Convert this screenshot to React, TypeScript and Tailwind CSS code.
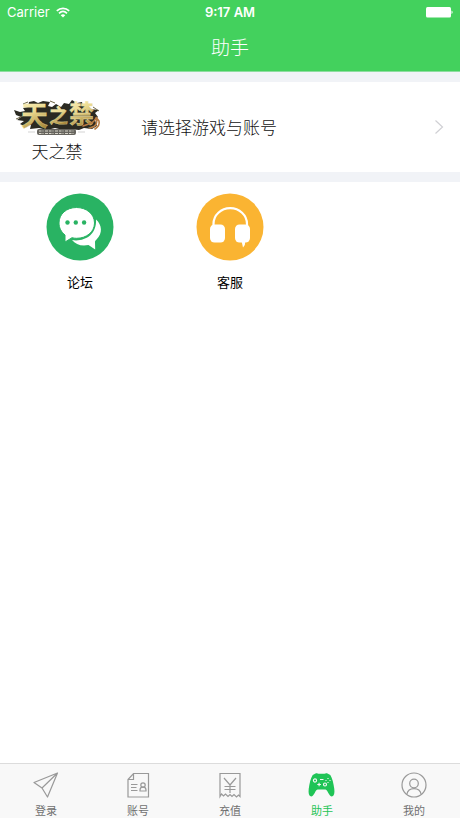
import React, { useState } from "react";

const GameLogo = () => (
  <svg viewBox="0 0 88 44" className="h-11 w-[88px] overflow-visible" aria-hidden="true">
    <defs>
      <linearGradient id="gold" x1="0" y1="0" x2="0.3" y2="1">
        <stop offset="0" stopColor="#fffbd6" />
        <stop offset="0.5" stopColor="#ecdb90" />
        <stop offset="1" stopColor="#a8873a" />
      </linearGradient>
    </defs>
    <path
      d="M1 15l6 2 5-1-2-3 5-1 1-5 5-1 4 2 5-2 7 1-2 4 4 1 4-3 5 3 3-4 5 1 3-4 5 3 5-1 1 4 5-1 2 4 9 1-4 3 3 4-3 3 2 6-5 3-8-1-5 2-9-1-7 1-8-2-8 2-8-2-9 1 1-4-7 1-4-2 4-3-7-1 4-3-5-2z"
      fill="#2b2a22"
    />
    <path d="M3 24l7-3M10 9l5-2M37 6l5 2M80 12l6 4M75 33l7-2" stroke="#6f6848" strokeWidth="1" />
    <g
      fill="url(#gold)"
      fontWeight="700"
      stroke="#f3e7ae"
      strokeWidth="0.3"
      className="font-['Noto_Sans_CJK_SC',sans-serif]"
    >
      <text x="8" y="31" fontSize="27">天</text>
      <text x="36" y="28" fontSize="19">之</text>
      <text x="56" y="28" fontSize="25">禁</text>
    </g>
    <path
      d="M70 31c7-3 10-2 13-8M77 33c6-1 8-5 6-11l3 4c1 4-1 6-4 8"
      fill="none"
      stroke="#b77b43"
      strokeWidth="1.6"
      strokeLinecap="round"
    />
    <path d="M15 37h7M65 37h7" stroke="#c8c8c8" strokeWidth="0.8" />
    <rect x="24" y="34" width="39" height="6" rx="2" fill="#66645e" />
    <path d="M26 36h35M26 38.500h35" stroke="#d8d5ca" strokeWidth="1.200" strokeDasharray="2.5 1 1 1.5 3 1" />
  </svg>
);

const ForumIcon = () => (
  <svg viewBox="0 0 68 68" className="size-[68px]" aria-hidden="true">
    <circle cx="34" cy="34" r="33.5" fill="#29b363" />
    <path
      d="M50 26.500c6 5 7 14 .5 20-1 1-1.500 1.500-1.500 2.500l.2 7.500-6.700-4.400c-7 1.500-13-.5-16.500-5 12 2 25-5 24-20.600z"
      fill="#fff"
    />
    <path
      d="M30.500 14.500c-10 0-17.500 6.500-17.500 15.500 0 5 2.300 9 6 12v7l7-4.300c1.500.4 3 .6 4.500.6 10 0 18-6.300 18-15.300s-8-15.500-18-15.500z"
      fill="#fff"
      stroke="#29b363"
      strokeWidth="1"
    />
    <g fill="#29b363">
      <circle cx="21.500" cy="29.500" r="2.200" />
      <circle cx="29.800" cy="29.500" r="2.200" />
      <circle cx="38.100" cy="29.500" r="2.200" />
    </g>
  </svg>
);

const ServiceIcon = () => (
  <svg viewBox="0 0 68 68" className="size-[68px]" aria-hidden="true">
    <circle cx="34" cy="34" r="33.500" fill="#fab432" />
    <path d="M17.500 34v-3c0-9 7.500-15.800 16.700-15.800S51 22 51 31v3" fill="none" stroke="#fff" strokeWidth="2.200" />
    <rect x="14" y="31.500" width="15" height="18" rx="4.500" fill="#fff" />
    <rect x="39" y="31.500" width="15" height="18" rx="4.500" fill="#fff" />
    <path d="M45.500 48l1.500 6.500 1.800-2.500 .5-4z" fill="#fff" />
  </svg>
);

const LoginIcon = () => <path d="M25.500 2L2 11.500l8 5.500 5.500 9zL10 17" strokeLinejoin="round" />;

const AccountIcon = () => (
  <>
    <path d="M9.500 2.500H24.500V26H4V8.500zM9.500 2.500v6H4" />
    <path d="M7 13.500h6.500M7 16.500h5.500M7 19.500h6.500" />
    <circle cx="19" cy="14" r="2.200" />
    <path d="M16 20v-1c0-2 1-2.800 3-2.800s3 .8 3 2.800v1z" />
  </>
);

const RechargeIcon = () => (
  <>
    <path d="M4 25.500V2.500h20v23l-1.500-1.500-2 2-2.500-2.500-2 2-2-2-2 2-2.500-2.500-2 2-2-2z" />
    <path d="M8 7l6 7 6-7M14 14v8M8.500 15.500h11M8.500 18.500h11" />
  </>
);

const HelperIcon = () => (
  <>
    <path
      d="M7.500 2.500c1-.4 2-.4 3 .3h6c1-.7 2-.7 3-.3l2.800 1.500c2 3 3.300 8.500 4 14 .5 4-.3 6.800-1.800 7.300s-3-1-4.200-3.300c-.9-1.800-1.500-3-2.800-3.500h-8c-1.300.5-1.900 1.700-2.800 3.500-1.200 2.300-2.700 3.800-4.200 3.300S.2 22 .7 18c.7-5.500 2-11 4-14z"
      fill="#1fc456"
      stroke="none"
    />
    <g stroke="#f8f8f8" strokeWidth="1.100">
      <circle cx="7" cy="9.500" r="1.600" />
      <path d="M12 8.500h3.500M9.300 13.500h3.600M11.100 11.700v3.600" />
      <circle cx="17" cy="13.500" r="1.500" />
      <path d="M20 7v1M20 11v1M17.500 9.500h1M21.500 9.500h1" />
    </g>
  </>
);

const MineIcon = () => (
  <>
    <circle cx="14" cy="14" r="12" />
    <circle cx="14" cy="12.500" r="4.300" />
    <path d="M6.800 23.500c.8-4 3.500-5.800 7.200-5.800s6.400 1.800 7.200 5.800" />
  </>
);

const services = [
  { id: "forum", title: "论坛", icon: <ForumIcon /> },
  { id: "service", title: "客服", icon: <ServiceIcon /> },
];

const tabs = [
  { id: "login", title: "登录", icon: <LoginIcon /> },
  { id: "account", title: "账号", icon: <AccountIcon /> },
  { id: "recharge", title: "充值", icon: <RechargeIcon /> },
  { id: "helper", title: "助手", icon: <HelperIcon /> },
  { id: "mine", title: "我的", icon: <MineIcon /> },
];

const StatusBar = () => (
  <div className="grid h-6 grid-cols-3 items-center px-[7px] font-['Inter',sans-serif] text-[13px] leading-6">
    <div className="flex items-center gap-1.5">
      <span>Carrier</span>
      <svg viewBox="0 0 14 11" className="h-[11px] w-3.5" fill="none" stroke="currentColor" aria-hidden="true">
        <path d="M.8 3.900c3.600-3.500 8.800-3.500 12.400 0M3 6.300c2.400-2.300 5.600-2.300 8 0" strokeWidth="1.700" />
        <path d="M7 10.500L4.700 8.200c1.300-1.200 3.300-1.200 4.600 0z" fill="currentColor" stroke="none" />
      </svg>
    </div>
    <span className="text-center font-semibold">9:17 AM</span>
    <svg viewBox="0 0 28 12" className="h-3 w-7 justify-self-end" fill="currentColor" aria-hidden="true">
      <rect x="1" y="1" width="25" height="10.500" rx="1.500" />
      <path d="M26.500 4.500c1.500.3 1.500 3.200 0 3.500z" />
    </svg>
  </div>
);

const App = () => {
  const [activeTab, setActiveTab] = useState("helper");

  return (
    <div className="flex min-h-screen flex-col bg-white font-['Noto_Sans_CJK_SC',sans-serif]">
      <header className="h-[72px] border-b border-[#8edda0] bg-[#43d15d] text-white">
        <StatusBar />
        <h1 className="text-center text-[19px] leading-[46px] font-light">助手</h1>
      </header>

      <main className="flex-1">
        {/* Game and account picker */}
        <section className="border-y-10 border-[#f1f3f7]">
          <button type="button" className="flex h-[90px] w-full items-center pr-4 pl-[13px] text-left text-[17px] text-[#111]">
            <span className="flex w-[88px] flex-col items-center pt-1">
              <GameLogo />
              <span className="leading-6 font-light">天之禁</span>
            </span>
            <span className="ml-10 flex-1 font-light">请选择游戏与账号</span>
            <svg viewBox="0 0 10 16" className="h-4 w-2.5" fill="none" stroke="#d0d0d4" strokeWidth="1.200" aria-hidden="true">
              <path d="M1.500 1.500L8.500 8l-7 6.500" />
            </svg>
          </button>
        </section>

        {/* Services */}
        <section className="grid grid-cols-3 px-[5px] pt-[11px]">
          {services.map((item) => (
            <button key={item.id} type="button" className="flex flex-col items-center gap-[11px]">
              {item.icon}
              <span className="text-[13px] leading-5 text-black">{item.title}</span>
            </button>
          ))}
        </section>
      </main>

      {/* Tab bar */}
      <nav className="sticky bottom-0 grid h-[55px] grid-cols-5 border-t border-[#dcdcdc] bg-[#f8f8f8]">
        {tabs.map((tab) => (
          <button
            key={tab.id}
            type="button"
            onClick={() => setActiveTab(tab.id)}
            className={`flex flex-col items-center gap-[3px] pt-[7px] text-[11px] leading-4 ${
              activeTab === tab.id ? "text-[#1fc456]" : "text-[#707070]"
            }`}>
            <svg viewBox="0 0 28 28" className="size-7" fill="none" stroke="#999" strokeWidth="1.200" aria-hidden="true">
              {tab.icon}
            </svg>
            <span>{tab.title}</span>
          </button>
        ))}
      </nav>
    </div>
  );
};

export default App;
